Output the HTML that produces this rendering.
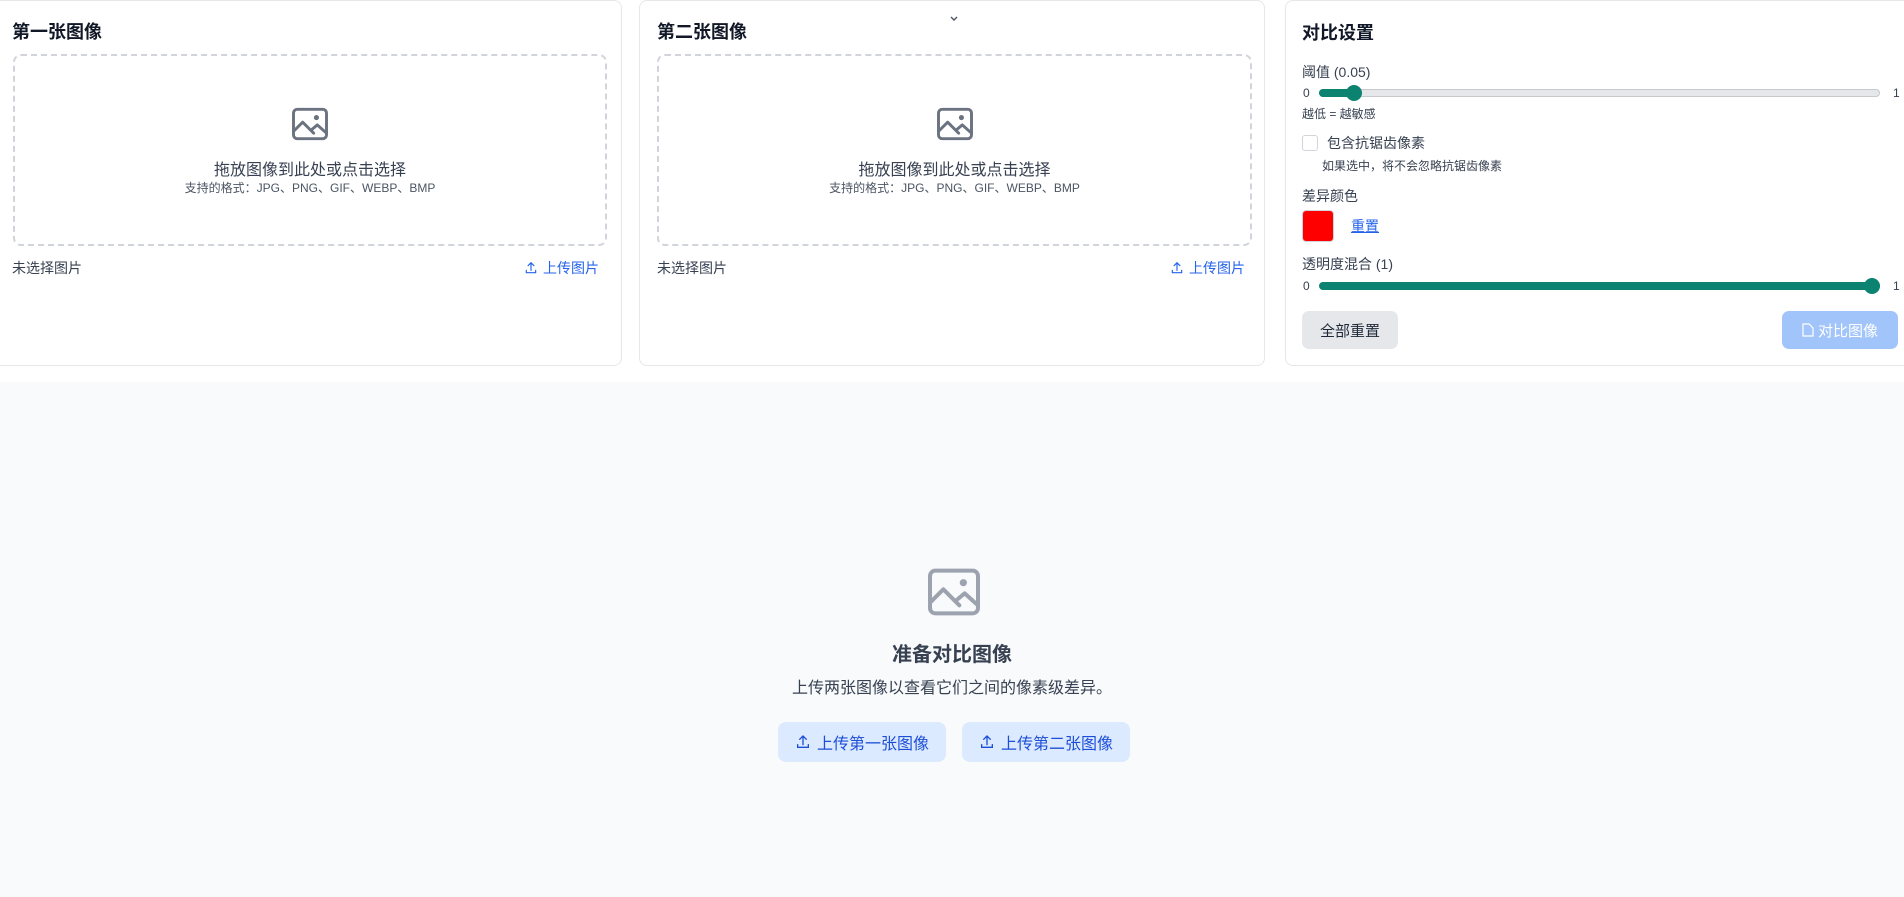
<!DOCTYPE html>
<html><head><meta charset="utf-8"><style>
*{box-sizing:border-box;margin:0;padding:0}
body{width:1904px;height:897px;overflow:hidden;background:#fff;font-family:"Liberation Sans","Noto Sans CJK SC",sans-serif;color:#1f2937;position:relative}
.card{position:absolute;top:0;height:366px;background:#fff;border:1px solid #e5e7eb;border-radius:8px}
.t{position:absolute;font-size:18px;font-weight:bold;color:#111827}
.drop{position:absolute;top:53px;height:192px;border:2px dashed #d1d5db;border-radius:8px;text-align:center}
.drop svg{position:absolute;left:50%;top:46px;margin-left:-22px}
.d1{position:absolute;left:0;right:0;top:100px;font-size:16px;color:#374151}
.d2{position:absolute;left:0;right:0;top:123px;font-size:12px;color:#4b5563}
.none{position:absolute;top:257px;font-size:14px;color:#374151}
.up{position:absolute;top:257px;font-size:14px;color:#2563eb;display:flex;align-items:center;gap:5px}
.lbl{position:absolute;left:16px;font-size:14px;color:#374151}
.sm{position:absolute;font-size:12px;color:#374151}
.track{position:absolute;left:33px;width:561px;height:8px;border-radius:4px;background:#e5e7eb;border:1px solid #c7c9cc}
.thumb{position:absolute;width:16px;height:16px;border-radius:50%;background:#0b8370;top:-5px}
.bottom{position:absolute;left:0;top:382px;width:1904px;height:515px;background:#f8fafc}
.bb{position:absolute;top:340px;height:40px;border-radius:8px;background:#dbeafe;color:#1d4ed8;font-size:16px;display:flex;align-items:center;justify-content:center;gap:6px}
</style></head><body>
<div class="card" style="left:-20px;width:642px">
 <div class="t" style="left:31px;top:17px">第一张图像</div>
 <div class="drop" style="left:32px;width:594px">
  <svg width="44" height="44" viewBox="0 0 24 24" fill="none" stroke="#6b7280" stroke-width="1.6" stroke-linecap="round" stroke-linejoin="round"><rect x="3" y="4" width="18" height="16" rx="2"/><circle cx="15.5" cy="8.5" r=".6" fill="#6b7280"/><path d="M3 16l5-5 6 6M13 15l3-2.5 5 4.5"/></svg>
  <div class="d1">拖放图像到此处或点击选择</div>
  <div class="d2">支持的格式：JPG、PNG、GIF、WEBP、BMP</div>
 </div>
 <div class="none" style="left:31px">未选择图片</div>
 <div class="up" style="right:22px"><svg width="14" height="14" viewBox="0 0 24 24" fill="none" stroke="#2563eb" stroke-width="2" stroke-linecap="round"><path d="M12 16V3M7 8l5-5 5 5M4 16v4h16v-4"/></svg>上传图片</div>
</div>
<div class="card" style="left:639px;width:626px">
 <div class="t" style="left:17px;top:17px">第二张图像</div>
 <div class="drop" style="left:17px;width:595px">
  <svg width="44" height="44" viewBox="0 0 24 24" fill="none" stroke="#6b7280" stroke-width="1.6" stroke-linecap="round" stroke-linejoin="round"><rect x="3" y="4" width="18" height="16" rx="2"/><circle cx="15.5" cy="8.5" r=".6" fill="#6b7280"/><path d="M3 16l5-5 6 6M13 15l3-2.5 5 4.5"/></svg>
  <div class="d1">拖放图像到此处或点击选择</div>
  <div class="d2">支持的格式：JPG、PNG、GIF、WEBP、BMP</div>
 </div>
 <div class="none" style="left:17px">未选择图片</div>
 <div class="up" style="right:19px"><svg width="14" height="14" viewBox="0 0 24 24" fill="none" stroke="#2563eb" stroke-width="2" stroke-linecap="round"><path d="M12 16V3M7 8l5-5 5 5M4 16v4h16v-4"/></svg>上传图片</div>
 <svg style="position:absolute;left:309px;top:14px" width="10" height="8" viewBox="0 0 10 8"><path d="M2 2l3 3 3-3" fill="none" stroke="#4b5563" stroke-width="1.4"/></svg>
</div>
<div class="card" style="left:1285px;width:640px">
 <div class="t" style="left:16px;top:18px">对比设置</div>
 <div class="lbl" style="top:61px">阈值 (0.05)</div>
 <div class="sm" style="left:17px;top:85px">0</div>
 <div class="track" style="top:88px"><div style="position:absolute;left:-1px;top:-1px;width:35px;height:8px;border-radius:4px;background:#0b8370"></div><div class="thumb" style="left:26px"></div></div>
 <div class="sm" style="left:607px;top:85px">1</div>
 <div class="sm" style="left:16px;top:104px">越低 = 越敏感</div>
 <div style="position:absolute;left:16px;top:134px;width:16px;height:16px;border:1px solid #d1d5db;border-radius:3px"></div>
 <div class="lbl" style="left:41px;top:132px">包含抗锯齿像素</div>
 <div class="sm" style="left:36px;top:156px">如果选中，将不会忽略抗锯齿像素</div>
 <div class="lbl" style="top:185px">差异颜色</div>
 <div style="position:absolute;left:16px;top:209px;width:32px;height:32px;background:#f00;border:1px solid #d1d5db;border-radius:4px"></div>
 <div style="position:absolute;left:65px;top:215px;font-size:14px;color:#2563eb;text-decoration:underline">重置</div>
 <div class="lbl" style="top:253px">透明度混合 (1)</div>
 <div class="sm" style="left:17px;top:278px">0</div>
 <div class="track" style="top:281px;background:#0b8370;border-color:#0b8370"><div class="thumb" style="left:544px"></div></div>
 <div class="sm" style="left:607px;top:278px">1</div>
 <div style="position:absolute;left:16px;top:310px;width:96px;height:38px;border-radius:7px;background:#e5e7eb;font-size:15px;color:#1f2937;display:flex;align-items:center;justify-content:center">全部重置</div>
 <div style="position:absolute;left:496px;top:310px;width:116px;height:38px;border-radius:7px;background:#a1c4fb;font-size:15px;color:#fff;display:flex;align-items:center;justify-content:center;gap:4px"><svg width="12" height="14" viewBox="0 0 12 14" fill="none" stroke="#fff" stroke-width="1.2"><path d="M1 1h6l4 4v8H1z"/></svg>对比图像</div>
</div>
<div class="bottom">
 <svg style="position:absolute;left:922px;top:178px" width="64" height="64" viewBox="0 0 24 24" fill="none" stroke="#9ca3af" stroke-width="1.5" stroke-linecap="round" stroke-linejoin="round"><rect x="3" y="4" width="18" height="16" rx="2"/><circle cx="15.5" cy="8.5" r=".6" fill="#9ca3af"/><path d="M3 16l5-5 6 6M13 15l3-2.5 5 4.5"/></svg>
 <div style="position:absolute;left:0;width:1904px;top:256px;text-align:center;font-size:20px;font-weight:bold;color:#374151">准备对比图像</div>
 <div style="position:absolute;left:0;width:1904px;top:292px;text-align:center;font-size:16px;color:#374151">上传两张图像以查看它们之间的像素级差异。</div>
 <div class="bb" style="left:778px;width:168px"><svg width="16" height="16" viewBox="0 0 24 24" fill="none" stroke="#1d4ed8" stroke-width="2" stroke-linecap="round"><path d="M12 16V3M7 8l5-5 5 5M4 16v4h16v-4"/></svg>上传第一张图像</div>
 <div class="bb" style="left:962px;width:168px"><svg width="16" height="16" viewBox="0 0 24 24" fill="none" stroke="#1d4ed8" stroke-width="2" stroke-linecap="round"><path d="M12 16V3M7 8l5-5 5 5M4 16v4h16v-4"/></svg>上传第二张图像</div>
</div>
</body></html>
